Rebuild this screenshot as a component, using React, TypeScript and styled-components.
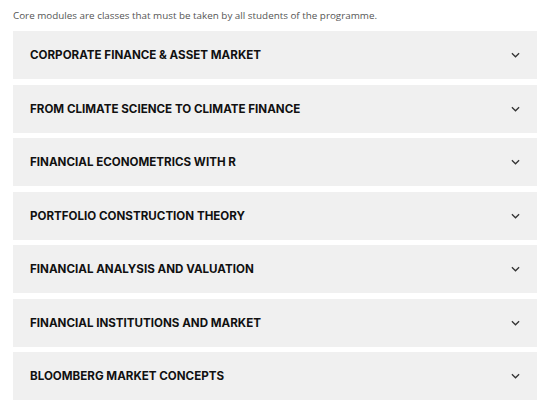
import styled, { createGlobalStyle } from "styled-components"

const modules: Array<string> = [
    "CORPORATE FINANCE & ASSET MARKET",
    "FROM CLIMATE SCIENCE TO CLIMATE FINANCE",
    "FINANCIAL ECONOMETRICS WITH R",
    "PORTFOLIO CONSTRUCTION THEORY",
    "FINANCIAL ANALYSIS AND VALUATION",
    "FINANCIAL INSTITUTIONS AND MARKET",
    "BLOOMBERG MARKET CONCEPTS",
]

const GlobalStyle = createGlobalStyle`
    body {
        margin: 0;
        background: #ffffff;
        font-family: "Open Sans", sans-serif;
    }
`

export default function App() {
    return (
        <Page>
            <GlobalStyle />
            <Intro>Core modules are classes that must be taken by all students of the programme.</Intro>
            <List>
                {modules.map((name) => (
                    <Item key={name}>
                        <Title>{name}</Title>
                        <Chevron viewBox="0 0 10 6" aria-hidden="true">
                            <path d="M1 1 L5 5 L9 1" />
                        </Chevron>
                    </Item>
                ))}
            </List>
        </Page>
    )
}

const Page = styled.div`
    display: flex;
    flex-direction: column;
    width: 524px;
    padding: 8px 0 0 13px;
`

const Intro = styled.p`
    margin: 0 0 9px 0;
    font-size: 9.85px;
    line-height: 14px;
    color: #555555;
`

const List = styled.div`
    display: flex;
    flex-direction: column;
    gap: 5.5px;
`

const Item = styled.div`
    display: flex;
    align-items: center;
    justify-content: space-between;
    height: 48px;
    padding: 0 17px 0 17px;
    background-color: #f0f0f0;
`

const Title = styled.span`
    font-family: Inter, sans-serif;
    font-weight: 700;
    font-size: 11.6px;
    color: #111111;
`

const Chevron = styled.svg`
    width: 9px;
    height: 6px;
    fill: none;
    stroke: #333333;
    stroke-width: 1.4;
`
